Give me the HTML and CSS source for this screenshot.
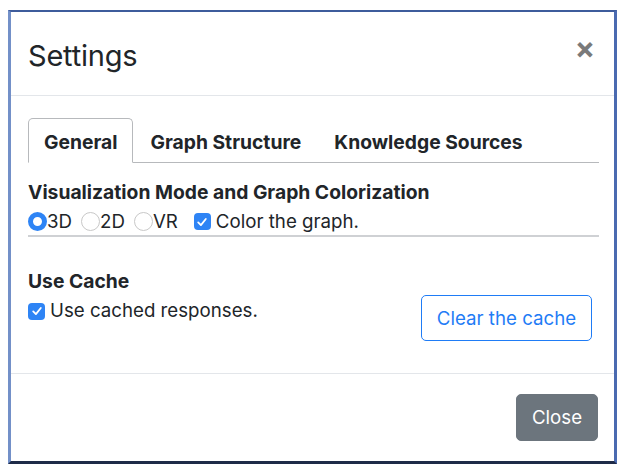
FILE: index.html
```html
<!DOCTYPE html>
<html>
<head>
<meta charset="utf-8">
<link rel="stylesheet" href="styles.css">
</head>
<body>
<div class="modal">
  <div class="modal-header">
    <h1 class="modal-title">Settings</h1>
    <span class="close">&times;</span>
  </div>
  <div class="modal-body">
    <div class="tabs">
      <div class="tab active">General</div>
      <div class="tab">Graph Structure</div>
      <div class="tab">Knowledge Sources</div>
    </div>
    <h2 class="section-title">Visualization Mode and Graph Colorization</h2>
    <div class="options">
      <label class="opt"><span class="radio checked"></span>3D</label>
      <label class="opt"><span class="radio"></span>2D</label>
      <label class="opt"><span class="radio"></span>VR</label>
      <label class="opt check-opt"><span class="checkbox"><svg viewBox="0 0 16 16" width="16" height="16"><path d="M4.2 8.4 L6.9 11.1 L11.8 5" fill="none" stroke="#fff" stroke-width="1.8" stroke-linecap="round" stroke-linejoin="round"/></svg></span>Color the graph.</label>
    </div>
    <div class="cache-row">
      <div class="cache-left">
        <h2 class="section-title">Use Cache</h2>
        <label class="opt check-opt"><span class="checkbox"><svg viewBox="0 0 16 16" width="16" height="16"><path d="M4.2 8.4 L6.9 11.1 L11.8 5" fill="none" stroke="#fff" stroke-width="1.8" stroke-linecap="round" stroke-linejoin="round"/></svg></span>Use cached responses.</label>
      </div>
      <button class="btn btn-outline">Clear the cache</button>
    </div>
  </div>
  <div class="modal-footer">
    <button class="btn btn-secondary">Close</button>
  </div>
</div>
</body>
</html>
```
FILE: styles.css
```css
* { box-sizing: border-box; }
html, body { margin: 0; padding: 0; background: #fff; }
body {
  font-family: Inter, "Liberation Sans", Arial, sans-serif;
  color: #212529;
  width: 622px;
  height: 468px;
  padding: 10px 5px 0 8px;
}
.modal {
  width: 609px;
  height: 454px;
  border-top: 2px solid #3e5c9c;
  border-left: 3px solid #7390c8;
  border-right: 3px solid #4a6ab0;
  border-bottom: 3px solid #1e2b48;
  background: #fff;
  display: flex;
  flex-direction: column;
}
.modal-header {
  height: 84px;
  border-bottom: 1px solid #e3e6ea;
  display: flex;
  align-items: center;
  justify-content: space-between;
  padding: 4px 19px 0 17px;
}
.modal-title {
  margin: 0;
  font-size: 29px;
  font-weight: 400;
  letter-spacing: -0.2px;
}
.close {
  font-size: 30px;
  font-weight: 700;
  color: #7a7a7a;
  line-height: 1;
  margin-top: -15px;
}
.modal-body {
  padding: 22px 15px 0 17px;
  height: 278px;
  border-bottom: 1px solid #e3e6ea;
}
.tabs {
  display: flex;
  border-bottom: 1px solid #b7b9bc;
  height: 45px;
}
.tab {
  font-size: 19.3px;
  font-weight: 700;
  padding: 11px 15px 0 15px;
  margin-right: 1px;
  color: #212529;
  border: 1px solid transparent;
  border-radius: 5px 5px 0 0;
  margin-bottom: -1px;
}
.tab.active {
  border-color: #b7b9bc;
  border-bottom-color: #fff;
  background: #fff;
}
.section-title {
  margin: 16px 0 0 0;
  font-size: 19.3px;
  font-weight: 700;
  line-height: 26px;
}
.options {
  display: flex;
  align-items: center;
  height: 32px;
  border-bottom: 2px solid #cfd1d4;
  padding-top: 3px;
  padding-bottom: 0;
}
.opt {
  display: inline-flex;
  align-items: center;
  font-size: 18.7px;
  line-height: 24px;
  margin-right: 9px;
}
.check-opt { margin-left: 7px; }
.radio {
  width: 19px;
  height: 19px;
  border-radius: 50%;
  border: 1px solid #c8c8c8;
  background: #fff;
  display: inline-block;
}
.radio.checked {
  border: 5px solid #2e84f5;
  background: #fff;
}
.checkbox {
  width: 17px;
  height: 17px;
  border-radius: 4px;
  background: #2e84f5;
  display: inline-flex;
  align-items: center;
  justify-content: center;
  margin-right: 5px;
}
.cache-row {
  display: flex;
  justify-content: space-between;
  align-items: flex-start;
  margin-top: 31px;
}
.cache-left .section-title { margin: 0 0 5px 0; }
.cache-left .check-opt { margin-left: 0; }
.btn {
  font-family: inherit;
  font-size: 18.7px;
  border-radius: 5px;
  cursor: pointer;
}
.btn-outline {
  margin-top: 27px;
  margin-right: 7px;
  width: 171px;
  height: 46px;
  background: #fff;
  border: 1px solid #1f7cf6;
  color: #1f7cf6;
}
.modal-footer {
  flex: 1;
  display: flex;
  justify-content: flex-end;
  align-items: flex-start;
  padding: 20px 16px 0 0;
}
.btn-secondary {
  width: 82px;
  height: 47px;
  background: #6c757d;
  border: 1px solid #6c757d;
  color: #fff;
}
```
